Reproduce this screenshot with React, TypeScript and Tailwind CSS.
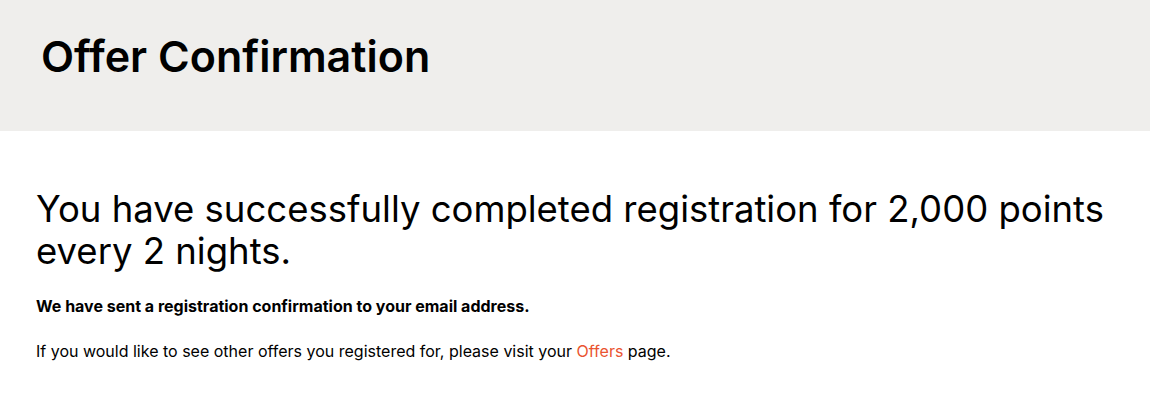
export default function App() {
  return (
    <div className="min-h-[416px] bg-white text-black" style={{ fontFamily: 'Inter, "Noto Sans", sans-serif' }}>
      <header className="h-[131px] bg-[#efeeec] px-[41px] pt-[30px]">
        <h1 className="text-[43px] font-semibold leading-[52px]">Offer Confirmation</h1>
      </header>
      <main className="px-[36px] pt-[57px]">
        <h2 className="text-[36.5px] font-normal leading-[42px]">
          You have successfully completed registration for 2,000 points every 2 nights.
        </h2>
        <p className="mt-[24px] text-[16px] font-bold leading-[20px]">
          We have sent a registration confirmation to your email address.
        </p>
        <p className="mt-[25px] text-[16px] leading-[20px]">
          If you would like to see other offers you registered for, please visit your{' '}
          <a href="#" className="text-[#ea5430]">Offers</a> page.
        </p>
      </main>
    </div>
  );
}
